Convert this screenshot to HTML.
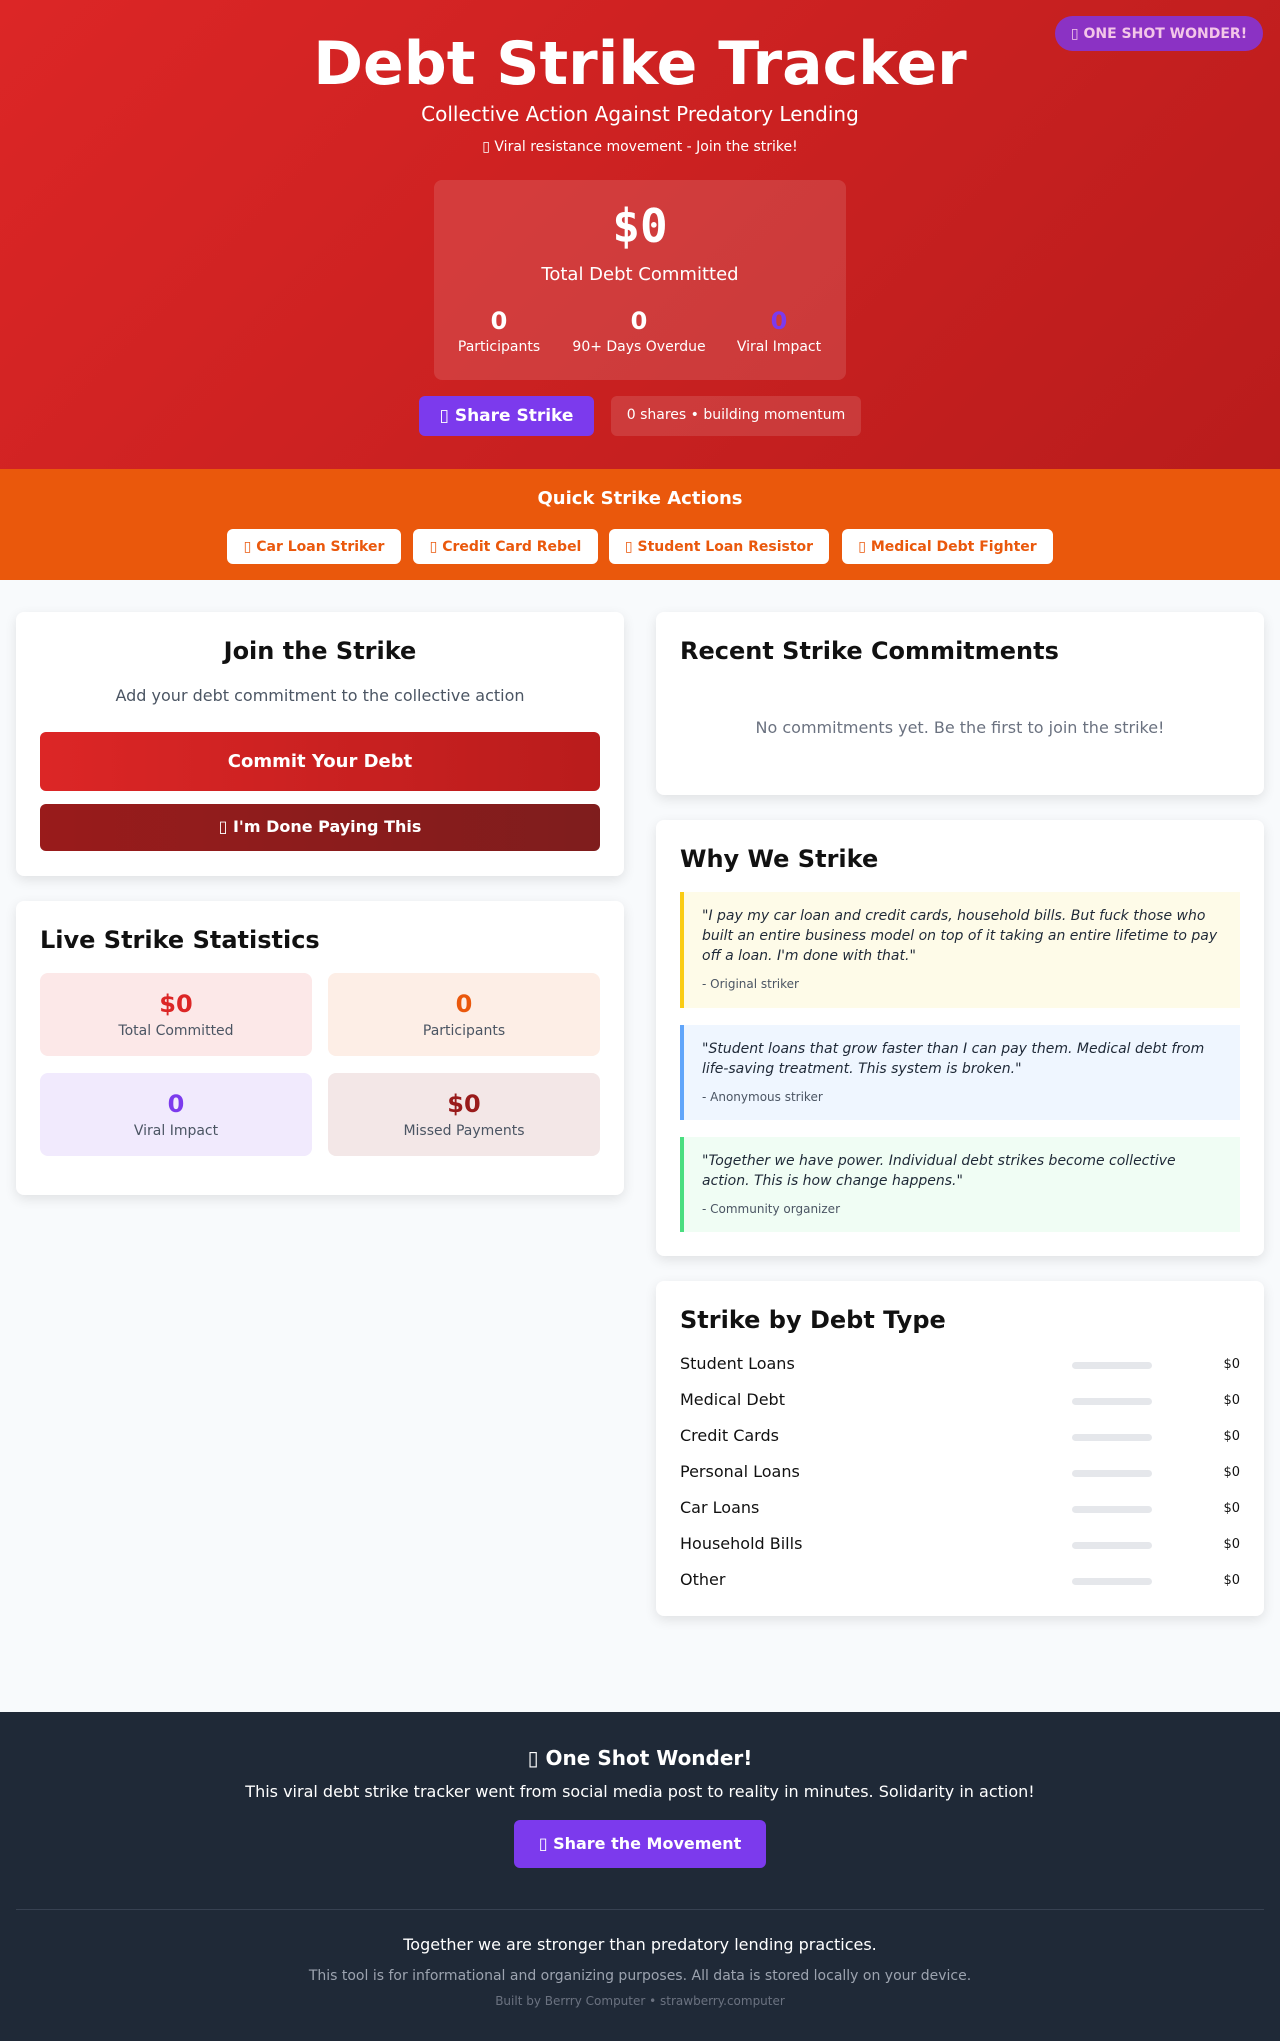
<!DOCTYPE html>
<html><head><meta charset="utf-8"><style>
*{box-sizing:border-box;margin:0;padding:0}
body{width:1280px;height:2041px;position:relative;background:#f8fafc;font-family:"DejaVu Sans","Liberation Sans",sans-serif;color:#111;overflow:hidden}
.a{position:absolute}
.c{text-align:center}
header{position:absolute;left:0;top:0;width:1280px;height:469px;background:linear-gradient(135deg,#dc2626,#b91c1c);color:#fff}
.badge{left:1055px;top:16px;width:208px;height:35px;border-radius:18px;background:#8b32c4;color:#f3c6e8;font-weight:bold;font-size:14px;line-height:37px;text-align:center}
.card{position:absolute;background:#fff;border-radius:8px;box-shadow:0 4px 12px rgba(0,0,0,.1)}
.qa{position:absolute;top:529px;height:35px;background:#fff;border-radius:6px;color:#ea580c;font-weight:bold;font-size:14px;line-height:37px;text-align:center}
h2{font-size:24px;font-weight:bold;position:absolute}
.sb{position:absolute;width:272px;height:83px;border-radius:8px;text-align:center}
.sb b{display:block;font-size:24px;margin-top:17px}
.sb span{display:block;font-size:14px;color:#4b5563;margin-top:5px}
.q{position:absolute;left:24px;width:560px;border-left:4px solid;padding:14px 18px;font-size:14px;font-style:italic;line-height:20px;color:#1f2937}
.q small{display:block;font-style:normal;font-size:12px;color:#4b5563;margin-top:8px}
.row{position:absolute;left:24px;width:560px;font-size:16px;height:20px}
.row i{position:absolute;left:392px;top:8px;width:80px;height:7px;border-radius:4px;background:#e5e7eb}
.row em{position:absolute;right:0;top:3px;font-style:normal;font-size:13px}
</style></head><body>
<header>
<div class="a badge">▯ ONE SHOT WONDER!</div>
<div class="a c" style="left:0;width:1280px;top:24px;font-size:60px;font-weight:bold;line-height:80px">Debt Strike Tracker</div>
<div class="a c" style="left:0;width:1280px;top:102px;font-size:20px">Collective Action Against Predatory Lending</div>
<div class="a c" style="left:0;width:1280px;top:139px;font-size:14px">▯ Viral resistance movement - Join the strike!</div>
<div class="a" style="left:434px;top:180px;width:412px;height:200px;border-radius:8px;background:rgba(255,255,255,.12)">
<div class="a c" style="left:0;width:412px;top:19px;font-family:'DejaVu Sans Mono',monospace;font-weight:bold;font-size:46px">$0</div>
<div class="a c" style="left:0;width:412px;top:84px;font-size:18px">Total Debt Committed</div>
<div class="a c" style="left:17px;width:96px;top:127px;font-size:24px;font-weight:bold">0</div>
<div class="a c" style="left:3px;width:124px;top:159px;font-size:14px">Participants</div>
<div class="a c" style="left:139px;width:132px;top:127px;font-size:24px;font-weight:bold">0</div>
<div class="a c" style="left:129px;width:152px;top:159px;font-size:14px">90+ Days Overdue</div>
<div class="a c" style="left:297px;width:96px;top:127px;font-size:24px;font-weight:bold;color:#7c3aed">0</div>
<div class="a c" style="left:287px;width:116px;top:159px;font-size:14px">Viral Impact</div>
</div>
<div class="a c" style="left:419px;top:396px;width:175px;height:40px;border-radius:6px;background:#7c3aed;font-weight:bold;font-size:17px;line-height:40px">▯ Share Strike</div>
<div class="a c" style="left:611px;top:396px;width:250px;height:40px;border-radius:6px;background:rgba(255,255,255,.12);font-size:14px;line-height:38px">0 shares • building momentum</div>
</header>
<div class="a" style="left:0;top:469px;width:1280px;height:111px;background:#ea580c"></div>
<div class="a c" style="left:0;width:1280px;top:488px;color:#fff;font-weight:bold;font-size:18px">Quick Strike Actions</div>
<div class="qa" style="left:227px;width:174px">▯ Car Loan Striker</div>
<div class="qa" style="left:413px;width:185px">▯ Credit Card Rebel</div>
<div class="qa" style="left:609px;width:220px">▯ Student Loan Resistor</div>
<div class="qa" style="left:842px;width:211px">▯ Medical Debt Fighter</div>

<div class="card" style="left:16px;top:612px;width:608px;height:264px">
<h2 class="c" style="left:0;width:608px;top:25px">Join the Strike</h2>
<div class="a c" style="left:0;width:608px;top:74px;font-size:16px;color:#4b5563">Add your debt commitment to the collective action</div>
<div class="a c" style="left:24px;top:120px;width:560px;height:59px;border-radius:6px;background:linear-gradient(90deg,#dc2626,#b91c1c);color:#fff;font-weight:bold;font-size:18px;line-height:59px">Commit Your Debt</div>
<div class="a c" style="left:24px;top:192px;width:560px;height:47px;border-radius:6px;background:linear-gradient(90deg,#991b1b,#7f1d1d);color:#fff;font-weight:bold;font-size:16px;line-height:45px">▯ I'm Done Paying This</div>
</div>
<div class="card" style="left:16px;top:901px;width:608px;height:294px">
<h2 style="left:24px;top:25px">Live Strike Statistics</h2>
<div class="sb" style="left:24px;top:72px;background:#fce8e8"><b style="color:#dc2626">$0</b><span>Total Committed</span></div>
<div class="sb" style="left:312px;top:72px;background:#fdeee6"><b style="color:#ea580c">0</b><span>Participants</span></div>
<div class="sb" style="left:24px;top:172px;background:#f1eafd"><b style="color:#7c3aed">0</b><span>Viral Impact</span></div>
<div class="sb" style="left:312px;top:172px;background:#f3e7e7"><b style="color:#991b1b">$0</b><span>Missed Payments</span></div>
</div>

<div class="card" style="left:656px;top:612px;width:608px;height:183px">
<h2 style="left:24px;top:25px">Recent Strike Commitments</h2>
<div class="a c" style="left:0;width:608px;top:106px;font-size:16px;color:#6b7280">No commitments yet. Be the first to join the strike!</div>
</div>
<div class="card" style="left:656px;top:820px;width:608px;height:436px">
<h2 style="left:24px;top:25px">Why We Strike</h2>
<div class="q" style="top:72px;height:116px;background:#fefbe8;border-color:#facc15">"I pay my car loan and credit cards, household bills. But fuck those who built an entire business model on top of it taking an entire lifetime to pay off a loan. I'm done with that."<small>- Original striker</small></div>
<div class="q" style="top:205px;height:95px;background:#eff6ff;border-color:#60a5fa">"Student loans that grow faster than I can pay them. Medical debt from life-saving treatment. This system is broken."<small>- Anonymous striker</small></div>
<div class="q" style="top:317px;height:95px;background:#f0fdf4;border-color:#4ade80">"Together we have power. Individual debt strikes become collective action. This is how change happens."<small>- Community organizer</small></div>
</div>
<div class="card" style="left:656px;top:1281px;width:608px;height:335px">
<h2 style="left:24px;top:25px">Strike by Debt Type</h2>
<div class="row" style="top:73px">Student Loans<i></i><em>$0</em></div>
<div class="row" style="top:109px">Medical Debt<i></i><em>$0</em></div>
<div class="row" style="top:145px">Credit Cards<i></i><em>$0</em></div>
<div class="row" style="top:181px">Personal Loans<i></i><em>$0</em></div>
<div class="row" style="top:217px">Car Loans<i></i><em>$0</em></div>
<div class="row" style="top:253px">Household Bills<i></i><em>$0</em></div>
<div class="row" style="top:289px">Other<i></i><em>$0</em></div>
</div>

<div class="a" style="left:0;top:1712px;width:1280px;height:329px;background:#1f2937;color:#fff">
<div class="a c" style="left:0;width:1280px;top:34px;font-size:20px;font-weight:bold">▯ One Shot Wonder!</div>
<div class="a c" style="left:0;width:1280px;top:70px;font-size:16px">This viral debt strike tracker went from social media post to reality in minutes. Solidarity in action!</div>
<div class="a c" style="left:514px;top:108px;width:252px;height:48px;border-radius:6px;background:#7c3aed;font-weight:bold;font-size:16px;line-height:48px">▯ Share the Movement</div>
<div class="a" style="left:16px;top:197px;width:1248px;height:1px;background:#374151"></div>
<div class="a c" style="left:0;width:1280px;top:223px;font-size:16px">Together we are stronger than predatory lending practices.</div>
<div class="a c" style="left:0;width:1280px;top:256px;font-size:14px;color:#9ca3af">This tool is for informational and organizing purposes. All data is stored locally on your device.</div>
<div class="a c" style="left:0;width:1280px;top:282px;font-size:12px;color:#6b7280">Built by Berrry Computer • strawberry.computer</div>
</div>
</body></html>
